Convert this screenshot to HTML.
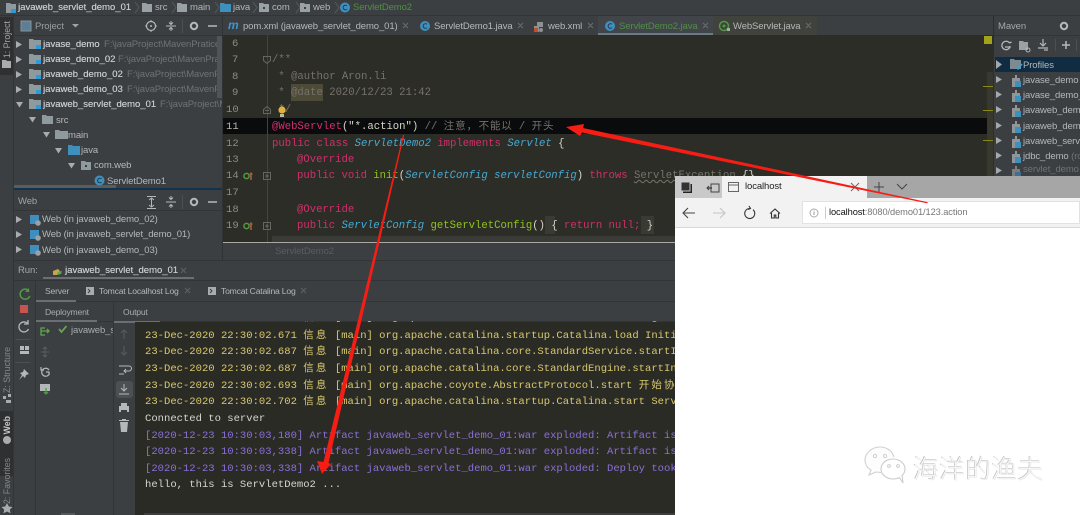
<!DOCTYPE html>
<html><head><meta charset="utf-8">
<style>
html,body{margin:0;padding:0;background:#3c3f41}
#p{position:relative;width:1080px;height:515px;overflow:hidden;background:#3c3f41;font-family:"Liberation Sans","Noto Sans CJK SC",sans-serif;font-size:9.5px;color:#b4b8ba}
#p div{position:absolute}
.t{position:absolute;white-space:pre;line-height:14px;height:14px;font-size:9.5px;letter-spacing:-.1px;margin-top:1px;filter:blur(.3px)}
.s{font-size:8.6px;letter-spacing:-.2px;margin-top:0}
.z{margin-top:0}
.m{position:absolute;white-space:pre;line-height:14px;height:14px;font-family:"Liberation Mono","Noto Sans CJK SC",monospace;font-size:10.55px;filter:blur(.25px)}
.e{font-size:10.6px}
.c{display:inline-block;width:12.66px;font-size:10.5px;line-height:10px}
.b{color:#c6cacc;letter-spacing:0;text-shadow:.2px 0 0 #c6cacc}
.g{color:#6f7376}
.n{color:#8a8d80}
.kw{color:#d02f6c}.cl{color:#45a9d2;font-style:italic}.fn{color:#8fc31f}.an{color:#d02f6c}.cm{color:#75736a}.w{color:#d8d6c8}
.y{color:#d8c86e}.pu{color:#8a6fd8}.wh{color:#d6d6d0}
svg{position:absolute;overflow:visible}
.v{position:absolute;writing-mode:vertical-rl;transform:rotate(180deg);white-space:pre;font-size:8.8px;line-height:12px;color:#a4a8aa;filter:blur(.3px)}
</style></head><body><div id="p">

<!-- editor -->
<div style="left:223px;top:35px;width:771px;height:207px;background:#2d2d27"></div>
<div style="left:223px;top:118px;width:770px;height:16px;background:#0a0b0c"></div>
<div style="left:267px;top:35px;width:1px;height:207px;background:#44443e"></div>
<div style="left:223px;top:242px;width:452px;height:1px;background:#a8a8a4"></div>
<div style="left:272px;top:236px;width:403px;height:6px;background:#3a3a36"></div>
<div style="left:987px;top:72px;width:6px;height:104px;background:#38382f"></div>
<div style="left:984px;top:36px;width:8px;height:8px;background:#a3a31a"></div>
<div style="left:983px;top:86px;width:10px;height:1px;background:#8a8a10"></div>
<div style="left:983px;top:110px;width:10px;height:1px;background:#8a8a10"></div>
<div style="left:983px;top:140px;width:10px;height:1px;background:#8a8a10"></div>
<div style="left:291px;top:84px;width:32px;height:17px;background:#4e4a38"></div>
<div style="left:545px;top:216px;width:10px;height:18px;background:#3a3a34"></div>
<div style="left:641px;top:216px;width:13px;height:18px;background:#3a3a34"></div>

<!-- line numbers -->
<div class="m n" style="left:232px;top:37px">6</div>
<div class="m n" style="left:232px;top:53px">7</div>
<div class="m n" style="left:232px;top:70px">8</div>
<div class="m n" style="left:232px;top:86px">9</div>
<div class="m n" style="left:226px;top:103px">10</div>
<div class="m" style="left:226px;top:120px;color:#b8b8a8">11</div>
<div class="m n" style="left:226px;top:137px">12</div>
<div class="m n" style="left:226px;top:153px">13</div>
<div class="m n" style="left:226px;top:169px">14</div>
<div class="m n" style="left:226px;top:186px">17</div>
<div class="m n" style="left:226px;top:203px">18</div>
<div class="m n" style="left:226px;top:219px">19</div>

<!-- code -->
<div class="m e cm" style="left:272px;top:53px">/**</div>
<div class="m e cm" style="left:272px;top:70px"> * @author Aron.li</div>
<div class="m e cm" style="left:272px;top:86px"> * @date 2020/12/23 21:42</div>
<div class="m e cm" style="left:272px;top:103px"> */</div>
<div class="m e" style="left:272px;top:120px"><span class="an">@WebServlet</span><span class="w">("*.action")</span> <span class="cm">// <span class="c" style="width:11.5px">注</span><span class="c" style="width:11.5px">意</span><span class="c" style="width:12px">，</span><span class="c" style="width:11.3px">不</span><span class="c" style="width:11.3px">能</span><span class="c" style="width:11.3px">以</span> / <span class="c" style="width:11.3px">开</span><span class="c" style="width:11.3px">头</span></span></div>
<div class="m e" style="left:272px;top:137px"><span class="kw">public class</span> <span class="cl">ServletDemo2</span> <span class="kw">implements</span> <span class="cl">Servlet</span> <span class="w">{</span></div>
<div class="m e kw" style="left:297px;top:153px">@Override</div>
<div class="m e" style="left:297px;top:169px"><span class="kw">public void</span> <span class="fn">init</span><span class="w">(</span><span class="cl">ServletConfig servletConfig</span><span class="w">)</span> <span class="kw">throws</span> <span class="cm" style="text-decoration:underline wavy #77776a 1px">ServletException</span> <span class="w">{}</span></div>
<div class="m e kw" style="left:297px;top:203px">@Override</div>
<div class="m e" style="left:297px;top:219px"><span class="kw">public</span> <span class="cl">ServletConfig</span> <span class="fn">getServletConfig</span><span class="w">() { </span><span class="kw">return null;</span><span class="w"> }</span></div>

<!-- gutter icons -->
<svg style="left:0;top:0" width="1080" height="515" fill="none">
 <path d="M263.500 56.500h7v4l-3.500 3-3.500-3z M263.500 113.500h7v-4l-3.500-3-3.500 3z" stroke="#66665e"/>
 <path d="M265 110.500h4" stroke="#66665e"/>
 <rect x="263.500" y="172.500" width="7" height="7" stroke="#66665e"/><path d="M265 176h4M267 174v4" stroke="#66665e"/>
 <rect x="263.500" y="222.500" width="7" height="7" stroke="#66665e"/><path d="M265 226h4M267 224v4" stroke="#66665e"/>
 <circle cx="282" cy="110" r="3.600" fill="#e2b13c"/><rect x="280" y="114" width="4" height="3" fill="#b9b9a8"/>
 <circle cx="246.500" cy="176" r="2.600" stroke="#4f9a45" stroke-width="1.500"/><path d="M251 180v-7" stroke="#b0603a" stroke-width="1.500"/><path d="M249 174.500l2-2.500 2 2.500" fill="#b0603a"/>
 <circle cx="246.500" cy="226" r="2.600" stroke="#4f9a45" stroke-width="1.500"/><path d="M251 230v-7" stroke="#b0603a" stroke-width="1.500"/><path d="M249 224.500l2-2.500 2 2.500" fill="#b0603a"/>
</svg>

<!-- editor breadcrumb -->
<div class="t z" style="left:275px;top:245px;color:#5a5d5f">ServletDemo2</div>

<!-- top breadcrumbs -->
<div style="left:0;top:15px;width:1080px;height:1px;background:#323436"></div>
<svg style="left:0;top:0" width="420" height="16" fill="none">
 <path d="M6 3h4l1 1h5v9H6z" fill="#8f9a9f"/><rect x="11" y="9" width="5" height="4" fill="#2c9cd8"/>
 <path d="M135 2l4 5.500-4 5.500M172 2l4 5.500-4 5.500M215 2l4 5.500-4 5.500M253 2l4 5.500-4 5.500M296 2l4 5.500-4 5.500M335 2l4 5.500-4 5.500" stroke="#565a5c"/>
 <path d="M142 3h4l1 1h5v8h-10z" fill="#9aa1a5"/>
 <path d="M177 3h4l1 1h5v8h-10z" fill="#9aa1a5"/>
 <path d="M220 3h4l1 1h6v8h-11z" fill="#3f8fbe"/>
 <path d="M259 3h4l1 1h5v8h-10z" fill="#9aa1a5"/><rect x="263" y="7" width="2" height="2" fill="#3c3f41"/>
 <path d="M300 3h4l1 1h5v8h-10z" fill="#9aa1a5"/><rect x="304" y="7" width="2" height="2" fill="#3c3f41"/>
 <circle cx="345" cy="7.500" r="5" fill="#3f8fbe"/><path d="M347 5.800a2.300 2.300 0 1 0 0 3.400" stroke="#1f3a4a"/>
</svg>
<div class="t b z" style="left:18px;top:1px">javaweb_servlet_demo_01</div>
<div class="t z" style="left:155px;top:1px">src</div>
<div class="t z" style="left:190px;top:1px">main</div>
<div class="t z" style="left:233px;top:1px">java</div>
<div class="t z" style="left:272px;top:1px">com</div>
<div class="t z" style="left:313px;top:1px">web</div>
<div class="t z" style="left:353px;top:1px;color:#4f8f45">ServletDemo2</div>

<!-- tabs -->
<div style="left:598px;top:16px;width:115px;height:17px;background:#41454a"></div>
<div style="left:598px;top:33px;width:115px;height:2px;background:#6b7b86"></div>
<div style="left:713px;top:16px;width:104px;height:19px;background:#40423c"></div>
<div class="t z" style="left:228px;top:18px;color:#3e95cc;font-weight:bold;font-style:italic;font-size:12px">m</div>
<div class="t" style="left:243px;top:19px">pom.xml (javaweb_servlet_demo_01)</div>
<div class="t" style="left:434px;top:19px">ServletDemo1.java</div>
<div class="t" style="left:548px;top:19px">web.xml</div>
<div class="t" style="left:619px;top:19px;color:#4f8f45">ServletDemo2.java</div>
<div class="t" style="left:733px;top:19px">WebServlet.java</div>
<svg style="left:0;top:0" width="1080" height="40" fill="none">
 <circle cx="425" cy="26" r="5" fill="#3f8fbe"/><path d="M427 24.300a2.300 2.300 0 1 0 0 3.400" stroke="#1f3a4a"/>
 <circle cx="610" cy="26" r="5" fill="#3f8fbe"/><path d="M612 24.300a2.300 2.300 0 1 0 0 3.400" stroke="#1f3a4a"/>
 <circle cx="724" cy="26" r="4.500" stroke="#4f9a45" stroke-width="1.500"/><circle cx="724" cy="26" r="1.500" fill="#4f9a45"/><rect x="727" y="28" width="3" height="3" fill="#a8acae"/>
 <path d="M537 22h6v5h-6zM534 26h5v6h-5z" fill="#8d9194"/><rect x="534" y="28" width="4" height="4" fill="#c0512c"/><circle cx="541" cy="30" r="2" fill="#8d9194"/>
 <path d="M403 23l5 5M408 23l-5 5M518 23l5 5M523 23l-5 5M588 23l5 5M593 23l-5 5M703 23l5 5M708 23l-5 5M806 23l5 5M811 23l-5 5" stroke="#6a6e70"/>
</svg>

<!-- left strip -->
<div style="left:13px;top:16px;width:1px;height:499px;background:#323436"></div>
<div style="left:0;top:17px;width:13px;height:58px;background:#2e3032"></div>
<div style="left:0;top:411px;width:13px;height:65px;background:#2e3032"></div>
<div class="v" style="left:1px;top:21px">1: Project</div>
<svg style="left:0;top:0" width="14" height="515" fill="none">
 <path d="M2 60h4l1 1h4v7H2z" fill="#a8acae"/>
 <path d="M3 395h3v3H3zM8 393h3v3H8zM6 399h5v3H6z" fill="#a8acae" transform="translate(0,1)"/>
 <circle cx="7" cy="440" r="4" fill="#a8acae"/>
 <path d="M7 503l1.800 3.500 3.700.5-2.700 2.600.7 3.700L7 511.500l-3.500 1.800.7-3.700L1.500 507l3.700-.5z" fill="#a8acae"/>
</svg>
<div class="v" style="left:1px;top:347px;color:#85898b">Z: Structure</div>
<div class="v" style="left:1px;top:416px;color:#c2c6c8;font-weight:bold">Web</div>
<div class="v" style="left:1px;top:458px;color:#85898b">2: Favorites</div>

<!-- project panel -->
<div style="left:14px;top:35px;width:209px;height:1px;background:#323436"></div>
<div style="left:217px;top:36px;width:5px;height:62px;background:#515456"></div>
<div style="left:14px;top:185px;width:102px;height:4px;background:#5a5d5f"></div>
<div style="left:14px;top:188px;width:209px;height:2px;background:#12334d"></div>
<div style="left:222px;top:16px;width:1px;height:244px;background:#303234"></div>
<div class="t" style="left:35px;top:19px;color:#9a9ea0">Project</div>
<svg style="left:0;top:0" width="225" height="260" fill="none">
 <rect x="21" y="21" width="10" height="10" fill="#5b7f99" stroke="#8a9095"/>
 <path d="M72 24h7l-3.500 3.500z" fill="#a0a4a6"/>
 <circle cx="151" cy="26" r="4.500" stroke="#b4b8ba" stroke-width="1.200"/><circle cx="151" cy="26" r="1" fill="#b4b8ba"/><path d="M151 20v2M151 30v2M145 26h2M155 26h2" stroke="#b4b8ba"/>
 <path d="M166 26h10M171 21v3M171 31v-3M169 22.500l2 2 2-2M169 29.500l2-2 2 2" stroke="#b4b8ba"/>
 <path d="M182.500 19v14" stroke="#4d5052"/>
 <circle cx="194" cy="26" r="3.200" stroke="#b4b8ba" stroke-width="2"/>
 <path d="M208 26h9" stroke="#b4b8ba" stroke-width="1.500"/>
 <g fill="#a8acae">
  <path d="M16 41l6 3.500-6 3.500zM16 56l6 3.500-6 3.500zM16 71l6 3.500-6 3.500zM16 86l6 3.500-6 3.500z"/>
  <path d="M16 102h7l-3.500 5.500zM29 117h7l-3.500 5.500zM43 132h7l-3.500 5.500zM55 148h7l-3.500 5.500zM68 163h7l-3.500 5.500z"/>
 </g>
 <path d="M29 39h4l1 1h7v9H29z" fill="#8f9a9f"/><rect x="36" y="45" width="5" height="4" fill="#2c9cd8"/>
 <path d="M29 54h4l1 1h7v9H29z" fill="#8f9a9f"/><rect x="36" y="60" width="5" height="4" fill="#2c9cd8"/>
 <path d="M29 69h4l1 1h7v9H29z" fill="#8f9a9f"/><rect x="36" y="75" width="5" height="4" fill="#2c9cd8"/>
 <path d="M29 84h4l1 1h7v9H29z" fill="#8f9a9f"/><rect x="36" y="90" width="5" height="4" fill="#2c9cd8"/>
 <path d="M29 99h4l1 1h7v9H29z" fill="#8f9a9f"/><rect x="36" y="105" width="5" height="4" fill="#2c9cd8"/>
 <path d="M42 115h4l1 1h6v8H42z" fill="#8f9a9f"/>
 <path d="M55 130h4l1 1h8v8H55z" fill="#8f9a9f"/>
 <path d="M68 145h4l1 1h7v9H68z" fill="#3f8fbe"/>
 <path d="M81 161h4l1 1h5v8H81z" fill="#8f9a9f"/><rect x="85" y="165" width="2" height="2" fill="#3c3f41"/>
 <circle cx="99.500" cy="180.500" r="5" fill="#3f8fbe"/><path d="M101.500 178.800a2.300 2.300 0 1 0 0 3.400" stroke="#1f3a4a"/>
</svg>
<div class="t b" style="left:43px;top:37px">javase_demo</div><div class="t g" style="left:104px;top:37px;width:113px;overflow:hidden">F:\javaProject\MavenPratice</div>
<div class="t b" style="left:43px;top:52px">javase_demo_02</div><div class="t g" style="left:118px;top:52px;width:99px;overflow:hidden">F:\javaProject\MavenPratice</div>
<div class="t b" style="left:43px;top:67px">javaweb_demo_02</div><div class="t g" style="left:127px;top:67px;width:90px;overflow:hidden">F:\javaProject\MavenPratice</div>
<div class="t b" style="left:43px;top:82px">javaweb_demo_03</div><div class="t g" style="left:127px;top:82px;width:90px;overflow:hidden">F:\javaProject\MavenPratice</div>
<div class="t b" style="left:43px;top:97px">javaweb_servlet_demo_01</div><div class="t g" style="left:160px;top:97px;width:62px;overflow:hidden">F:\javaProject\MavenPratice</div>
<div class="t" style="left:56px;top:113px">src</div>
<div class="t" style="left:68px;top:128px">main</div>
<div class="t" style="left:81px;top:143px">java</div>
<div class="t" style="left:94px;top:158px">com.web</div>
<div class="t" style="left:107px;top:174px">ServletDemo1</div>

<!-- web panel -->
<div class="t" style="left:18px;top:194px;color:#a0a4a6">Web</div>
<div style="left:14px;top:210px;width:208px;height:1px;background:#323436"></div>
<svg style="left:0;top:190px" width="225" height="70" fill="none">
 <path d="M147 6.500h9M147 18.500h9M151.500 8v9M149 10l2.500-2 2.500 2M149 15l2.500 2 2.500-2" stroke="#b4b8ba"/>
 <path d="M166 12h10M171 6v3M171 18v-3M169 7.500l2 2 2-2M169 16.500l2-2 2 2" stroke="#b4b8ba"/>
 <path d="M182.500 5v14" stroke="#4d5052"/>
 <circle cx="194" cy="12" r="3.200" stroke="#b4b8ba" stroke-width="2"/>
 <path d="M208 12h9" stroke="#b4b8ba" stroke-width="1.500"/>
 <path d="M16 26l6 3.500-6 3.500zM16 41l6 3.500-6 3.500zM16 56l6 3.500-6 3.500z" fill="#a8acae"/>
 <rect x="30" y="25" width="9" height="9" fill="#3f8fbe"/><circle cx="38" cy="33" r="2.800" fill="#9aa0a3"/>
 <rect x="30" y="40" width="9" height="9" fill="#3f8fbe"/><circle cx="38" cy="48" r="2.800" fill="#9aa0a3"/>
 <rect x="30" y="55" width="9" height="9" fill="#3f8fbe"/><circle cx="38" cy="63" r="2.800" fill="#9aa0a3"/>
</svg>
<div class="t" style="left:42px;top:212px">Web (in javaweb_demo_02)</div>
<div class="t" style="left:42px;top:227px">Web (in javaweb_servlet_demo_01)</div>
<div class="t" style="left:42px;top:243px">Web (in javaweb_demo_03)</div>

<!-- maven -->
<div style="left:993px;top:16px;width:1px;height:160px;background:#2b2d2f"></div>
<div style="left:994px;top:35px;width:86px;height:1px;background:#323436"></div>
<div style="left:995px;top:57px;width:85px;height:15px;background:#0f2c42"></div>
<div class="t" style="left:998px;top:19px;color:#a4a8aa">Maven</div>
<svg style="left:990px;top:15px" width="90" height="165" fill="none">
 <circle cx="74" cy="11" r="3.200" stroke="#b4b8ba" stroke-width="2"/>
 <path d="M19.500 28a4.200 4.200 0 1 0 .5 4M15 32h5v-1M19.500 28l2-1" stroke="#b4b8ba" stroke-width="1.300"/>
 <path d="M29 26h4l1 1h4v8h-9z" fill="#9aa1a5"/><circle cx="38" cy="35" r="2" stroke="#b4b8ba"/>
 <path d="M53 24v7M50 28l3 3 3-3M48 33h10M54 35h4" stroke="#b4b8ba" stroke-width="1.200"/>
 <path d="M65.500 24v12" stroke="#4d5052"/>
 <path d="M72 30h8M76 26v8" stroke="#b4b8ba" stroke-width="1.500"/>
 <path d="M86.500 24v12" stroke="#4d5052"/>
 <path d="M6 45l6 4.500-6 4.500zM6 61l6 3.500-6 3.500zM6 76l6 3.500-6 3.500zM6 91l6 3.500-6 3.500zM6 107l6 3.500-6 3.500zM6 122l6 3.500-6 3.500zM6 137l6 3.500-6 3.500zM6 152l6 3.500-6 3.500z" fill="#a4a8aa"/>
 <path d="M20 44h4l1 1h6v9H20z" fill="#7f8a90"/><path d="M26 52l2 2 4-5" stroke="#3aa0dd" stroke-width="1.500"/>
 <path d="M22 63h3v-3h2v3h3v9h-8z" fill="#8f9598"/><rect x="25" y="66" width="6" height="6" fill="#3f8fbe"/>
 <path d="M22 78h3v-3h2v3h3v9h-8z" fill="#8f9598"/><rect x="25" y="81" width="6" height="6" fill="#3f8fbe"/>
 <path d="M22 93h3v-3h2v3h3v9h-8z" fill="#8f9598"/><rect x="25" y="96" width="6" height="6" fill="#3f8fbe"/>
 <path d="M22 109h3v-3h2v3h3v9h-8z" fill="#8f9598"/><rect x="25" y="112" width="6" height="6" fill="#3f8fbe"/>
 <path d="M22 124h3v-3h2v3h3v9h-8z" fill="#8f9598"/><rect x="25" y="127" width="6" height="6" fill="#3f8fbe"/>
 <path d="M22 139h3v-3h2v3h3v9h-8z" fill="#8f9598"/><rect x="25" y="142" width="6" height="6" fill="#3f8fbe"/>
 <path d="M22 154h3v-3h2v3h3v8h-8z" fill="#7a7e80"/><rect x="25" y="157" width="6" height="5" fill="#3f6f8e"/>
</svg>
<div class="t" style="left:1023px;top:58px">Profiles</div>
<div class="t" style="left:1023px;top:73px">javase_demo</div>
<div class="t" style="left:1023px;top:88px">javase_demo_02</div>
<div class="t" style="left:1023px;top:103px">javaweb_demo_02</div>
<div class="t" style="left:1023px;top:119px">javaweb_demo_03</div>
<div class="t" style="left:1023px;top:134px">javaweb_servlet</div>
<div class="t" style="left:1023px;top:149px">jdbc_demo <span class="g">(root)</span></div>
<div class="t g" style="left:1023px;top:162px;height:14px;overflow:hidden">servlet_demo</div>

<!-- run panel -->
<div style="left:14px;top:260px;width:661px;height:1px;background:#323436"></div>
<div class="t" style="left:18px;top:263px;color:#a4a8aa">Run:</div>
<div class="t b" style="left:65px;top:263px">javaweb_servlet_demo_01</div>
<div style="left:43px;top:277px;width:151px;height:2px;background:#6b6f72"></div>
<div style="left:14px;top:280px;width:661px;height:1px;background:#323436"></div>
<div style="left:35px;top:281px;width:1px;height:234px;background:#323436"></div>
<div style="left:36px;top:301px;width:639px;height:1px;background:#323436"></div>
<div style="left:36px;top:300px;width:40px;height:2px;background:#6b6f72"></div>
<div style="left:36px;top:321px;width:639px;height:1px;background:#323436"></div>
<div style="left:36px;top:320px;width:61px;height:2px;background:#6b6f72"></div>
<div style="left:114px;top:321px;width:46px;height:2px;background:#6b6f72"></div>
<div style="left:113px;top:302px;width:1px;height:213px;background:#323436"></div>
<div style="left:135px;top:322px;width:540px;height:193px;background:#2b2b26"></div>
<div style="left:144px;top:513px;width:531px;height:2px;background:#3e3f3c"></div>
<div style="left:61px;top:513px;width:14px;height:2px;background:#55585a"></div>
<div style="left:116px;top:381px;width:17px;height:17px;background:#4c5053;border-radius:3px"></div>
<div class="t s" style="left:45px;top:284px;color:#b0b4b6">Server</div>
<div class="t s" style="left:99px;top:284px">Tomcat Localhost Log</div>
<div class="t s" style="left:221px;top:284px">Tomcat Catalina Log</div>
<div class="t s" style="left:45px;top:305px;color:#a8acae">Deployment</div>
<div class="t s" style="left:123px;top:305px;color:#a8acae">Output</div>
<div class="t" style="left:71px;top:323px;width:42px;overflow:hidden;color:#a8acae">javaweb_s</div>
<svg style="left:0;top:0" width="135" height="515" fill="none">
 <path d="M31 268a5 5 0 1 0 .8 5" stroke="#4f9a45" stroke-width="1.500" transform="translate(-2,23)"/><path d="M25 292l4 0 0-4z" fill="#4f9a45"/>
 <rect x="20" y="305" width="8" height="8" fill="#c75450"/>
 <path d="M28 324a5 5 0 1 0 .5 5M28 320v4h-4" stroke="#b4b8ba" stroke-width="1.300"/>
 <path d="M15.500 339h15v1h-15z" fill="#4d5052"/>
 <path d="M20 346h4v4h-4zM25 346h4v4h-4zM20 351h9v3h-9z" fill="#b4b8ba"/>
 <path d="M15.500 362h15v1h-15z" fill="#4d5052"/>
 <path d="M24 369l5 5-3 1-1 3-2-2-4 4 3-5-2-2 3-1z" fill="#b4b8ba"/>
 <path d="M45 328h-4v7h4M41 331h8M47 329l2 2-2 2" stroke="#5fa64f" stroke-width="1.300"/>
 <path d="M59 329l2.500 3 5-6" stroke="#5fa64f" stroke-width="1.800"/>
 <path d="M41 352h8M45 348v8M43 349l2-2 2 2M43 355l2 2 2-2" stroke="#5a5e60"/>
 <path d="M49 368a4 4 0 1 0 .5 3.500M41 365v3h3M49 373v-3h-3" stroke="#b4b8ba" stroke-width="1.200" transform="translate(0,2)"/>
 <path d="M40 384h10v7H40z" fill="#b4b8ba"/><path d="M46 388v5M44 392l2 2 2-2" stroke="#4f9a45" stroke-width="1.300"/>
 <path d="M124 330v9M121 333l3-3 3 3" stroke="#585c5e"/>
 <path d="M124 346v9M121 352l3 3 3-3" stroke="#585c5e"/>
 <path d="M119 366h10a2 2 0 0 1 0 5h-5M119 374h5M126 369l-2 2 2 2" stroke="#b4b8ba"/>
 <path d="M124 384v7M121 388l3 3 3-3M119 394h10" stroke="#b4b8ba"/>
 <path d="M119 406h10v6h-10zM121 403h6v3h-6z" fill="#b4b8ba"/><path d="M121 410h6v3h-6z" fill="#3c3f41"/>
 <path d="M120 422h8l-1 10h-6zM119 421h10v-1h-10zM122 419h4v1h-4z" fill="#b4b8ba"/>
</svg>
<svg style="left:0;top:260px" width="340" height="40" fill="none">
 <path d="M53 11l5-2 2 2-3 4-4 0z" fill="#c6a64a"/><path d="M58 12l4-1-1 3-4 1z" fill="#5fa64f"/>
 <rect x="86" y="27" width="8" height="8" fill="#a8acae"/><path d="M88 29l2 2-2 2" stroke="#3c3f41"/>
 <rect x="208" y="27" width="8" height="8" fill="#a8acae"/><path d="M210 29l2 2-2 2" stroke="#3c3f41"/>
 <path d="M181 8l5 5M186 8l-5 5M185 28l5 5M190 28l-5 5M301 28l5 5M306 28l-5 5" stroke="#5e6264"/>
</svg>

<!-- console -->
<div class="m y" style="left:145px;top:311px;width:530px;overflow:hidden;clip-path:inset(10px 0 0 0)">23-Dec-2020 22:30:02.655 <span class="c">信</span><span class="c">息</span> [main] org.apache.tomcat.util.net.NioSelectorPool.getS</div>
<div class="m y" style="left:145px;top:329px;width:530px;overflow:hidden">23-Dec-2020 22:30:02.671 <span class="c">信</span><span class="c">息</span> [main] org.apache.catalina.startup.Catalina.load Initi</div>
<div class="m y" style="left:145px;top:345px;width:530px;overflow:hidden">23-Dec-2020 22:30:02.687 <span class="c">信</span><span class="c">息</span> [main] org.apache.catalina.core.StandardService.startI</div>
<div class="m y" style="left:145px;top:362px;width:530px;overflow:hidden">23-Dec-2020 22:30:02.687 <span class="c">信</span><span class="c">息</span> [main] org.apache.catalina.core.StandardEngine.startIn</div>
<div class="m y" style="left:145px;top:379px;width:530px;overflow:hidden">23-Dec-2020 22:30:02.693 <span class="c">信</span><span class="c">息</span> [main] org.apache.coyote.AbstractProtocol.start <span class="c">开</span><span class="c">始</span><span class="c">协</span></div>
<div class="m y" style="left:145px;top:395px;width:530px;overflow:hidden">23-Dec-2020 22:30:02.702 <span class="c">信</span><span class="c">息</span> [main] org.apache.catalina.startup.Catalina.start Serv</div>
<div class="m wh" style="left:145px;top:412px">Connected to server</div>
<div class="m pu" style="left:145px;top:429px;width:530px;overflow:hidden">[2020-12-23 10:30:03,180] Artifact javaweb_servlet_demo_01:war exploded: Artifact is</div>
<div class="m pu" style="left:145px;top:445px;width:530px;overflow:hidden">[2020-12-23 10:30:03,338] Artifact javaweb_servlet_demo_01:war exploded: Artifact is</div>
<div class="m pu" style="left:145px;top:462px;width:530px;overflow:hidden">[2020-12-23 10:30:03,338] Artifact javaweb_servlet_demo_01:war exploded: Deploy took</div>
<div class="m wh" style="left:145px;top:478px">hello, this is ServletDemo2 ...</div>

<!-- browser -->
<div style="left:675px;top:176px;width:405px;height:339px;background:#fff"></div>
<div style="left:675px;top:176px;width:405px;height:22px;background:#a6a6a6"></div>
<div style="left:675px;top:176px;width:47px;height:22px;background:#c9c9c9"></div>
<div style="left:722px;top:176px;width:145px;height:22px;background:#f2f2f2"></div>
<div style="left:675px;top:198px;width:405px;height:29px;background:#f2f2f2"></div>
<div style="left:675px;top:227px;width:405px;height:1px;background:#d8d8d8"></div>
<div style="left:802px;top:201px;width:278px;height:23px;background:#fff;border:1px solid #e2e2e2;box-sizing:border-box"></div>
<div class="t z" style="left:745px;top:180px;color:#222">localhost</div>
<div class="t z" style="left:829px;top:205px;font-size:9.3px;color:#777"><span style="color:#111">localhost</span>:8080/demo01/123.action</div>
<svg style="left:675px;top:176px" width="405" height="60" fill="none">
 <rect x="8" y="8" width="9" height="9" fill="#222"/><rect x="6" y="6" width="9" height="9" fill="#333" stroke="#c9c9c9"/>
 <path d="M36 8h8v8h-8z" stroke="#444"/><path d="M32 12h5" stroke="#444" stroke-width="1.500"/><path d="M34 10l-2 2 2 2" stroke="#444"/>
 <rect x="53.500" y="6.500" width="10" height="9" stroke="#666"/><path d="M54 9h9" stroke="#666"/>
 <path d="M176 7l8 8M184 7l-8 8" stroke="#666"/>
 <path d="M199 11h10M204 6v10" stroke="#444"/>
 <path d="M222 8l5 5 5-5" stroke="#444"/>
 <path d="M20 37h-11M13 32l-5 5 5 5" stroke="#444" stroke-width="1.100"/>
 <path d="M38 37h11M45 32l5 5-5 5" stroke="#c4c4c4" stroke-width="1.100"/>
 <path d="M75 32.500a5 5 0 1 0 3 1.200M74 30l1.500 2.500-2.500 1" stroke="#333" stroke-width="1.100"/>
 <path d="M95 37.500l5-4.500 5 4.500M96.500 37v5h2.800v-3h1.500v3h2.700v-5" stroke="#333" stroke-width="1.100"/>
 <circle cx="139" cy="37" r="4" stroke="#aaa"/><path d="M139 36v3M139 34.500v1" stroke="#999"/>
 <path d="M150.500 31v12" stroke="#ccc"/>
</svg>

<!-- watermark -->
<svg style="left:840px;top:430px" width="100" height="60" fill="none">
 <path d="M54 27C52 21 47 17 40 17 32 17 25 23 25 30c0 4 2 8 6 10l-2 5 7-3c1 .2 3 .4 5 .4" stroke="#d0d0d0" stroke-width="1.100" fill="#fdfdfd"/>
 <ellipse cx="53" cy="39" rx="12" ry="10" stroke="#cccccc" stroke-width="1.100" fill="#fff"/>
 <path d="M59 47l4 6-1-8" stroke="#cccccc" stroke-width="1.100" fill="#fff"/>
 <circle cx="35" cy="26" r="1.600" stroke="#cfcfcf"/><circle cx="45" cy="26" r="1.600" stroke="#cfcfcf"/>
 <circle cx="49" cy="36" r="1.400" stroke="#cfcfcf"/><circle cx="58" cy="36" r="1.400" stroke="#cfcfcf"/>
</svg>
<div class="t z" style="left:913px;top:453px;height:30px;line-height:30px;font-size:25.5px;letter-spacing:.6px;color:#f6f6f6;text-shadow:-.6px -.6px 0 #b8b8b8,.5px .5px 0 #e4e4e4;font-family:'Noto Sans CJK SC',sans-serif;font-weight:300">海洋的渔夫</div>

<!-- red arrows -->
<svg style="left:0;top:0" width="1080" height="515">
 <path d="M928 202.300L583 128 584 124 566 127 580 136 582 132.500 927 203.300z" fill="#f51d14"/>
 <path d="M403 135L323.500 462 317 461 322 474 331 464 328.500 463 404.200 135z" fill="#f51d14"/>
</svg>
</div></body></html>
